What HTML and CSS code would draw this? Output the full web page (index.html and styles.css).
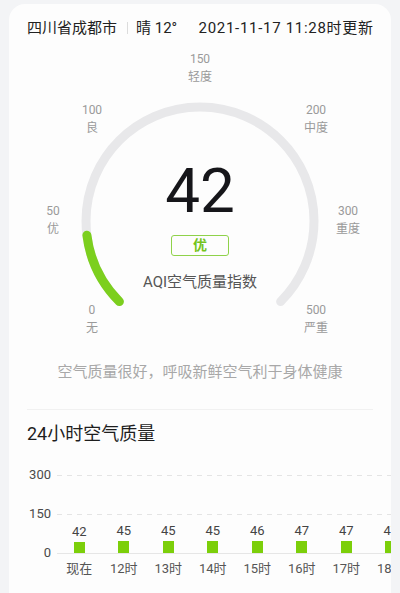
FILE: index.html
```html
<!DOCTYPE html>
<html lang="zh">
<head>
<meta charset="utf-8">
<title>空气质量</title>
<link rel="stylesheet" href="styles.css">
</head>
<body>
<div class="card">
  <div class="header">
    <span class="city">四川省成都市</span>
    <span class="sep"></span>
    <span class="weather">晴 12°</span>
    <span class="updated">2021-11-17 11:28时更新</span>
  </div>

  <div class="gauge">
    <svg class="gauge-svg" width="382" height="307" viewBox="0 0 382 307">
      <path d="M110.4 263.6 A114 114 0 1 1 271.6 263.6" fill="none" stroke="#e8e8ea" stroke-width="9" stroke-linecap="round"/>
      <path d="M110.4 263.6 A114 114 0 0 1 77.9 197.3" fill="none" stroke="#7ccf1e" stroke-width="9" stroke-linecap="round"/>
    </svg>
    <div class="tick t150"><span>150</span><span>轻度</span></div>
    <div class="tick t100"><span>100</span><span>良</span></div>
    <div class="tick t200"><span>200</span><span>中度</span></div>
    <div class="tick t50"><span>50</span><span>优</span></div>
    <div class="tick t300"><span>300</span><span>重度</span></div>
    <div class="tick t0"><span>0</span><span>无</span></div>
    <div class="tick t500"><span>500</span><span>严重</span></div>
    <div class="center">
      <div class="value">42</div>
      <div class="badge">优</div>
      <div class="aqi-label">AQI空气质量指数</div>
    </div>
  </div>

  <div class="desc">空气质量很好，呼吸新鲜空气利于身体健康</div>
  <div class="divider"></div>
  <div class="title">24小时空气质量</div>

  <div class="chart">
    <div class="yaxis">
      <span>300</span>
      <span>150</span>
      <span>0</span>
    </div>
    <div class="plot-wrap">
      <div class="plot">
        <div class="col"><span class="num">42</span><span class="bar" style="height:10.9px"></span></div>
        <div class="col"><span class="num">45</span><span class="bar" style="height:11.7px"></span></div>
        <div class="col"><span class="num">45</span><span class="bar" style="height:11.7px"></span></div>
        <div class="col"><span class="num">45</span><span class="bar" style="height:11.7px"></span></div>
        <div class="col"><span class="num">46</span><span class="bar" style="height:12px"></span></div>
        <div class="col"><span class="num">47</span><span class="bar" style="height:12.2px"></span></div>
        <div class="col"><span class="num">47</span><span class="bar" style="height:12.2px"></span></div>
        <div class="col"><span class="num">47</span><span class="bar" style="height:12.2px"></span></div>
      </div>
      <div class="xaxis">
        <span>现在</span><span>12时</span><span>13时</span><span>14时</span><span>15时</span><span>16时</span><span>17时</span><span>18时</span>
      </div>
    </div>
  </div>
</div>
</body>
</html>
```

FILE: styles.css
```css
* { box-sizing: border-box; }
html, body { margin: 0; padding: 0; }
body {
  background: #f3f4f6;
  font-family: Roboto, "Noto Sans CJK SC", sans-serif;
  width: 400px;
  height: 593px;
  overflow: hidden;
}
.card {
  margin: 4px 9px 0;
  width: 382px;
  height: 589px;
  background: #fdfdfd;
  border-radius: 16px 16px 0 0;
  padding: 14px 18px 0;
  overflow: hidden;
}
.header {
  display: flex;
  align-items: center;
  height: 20px;
  line-height: 20px;
  font-size: 15px;
  color: #222;
}
.sep {
  width: 1px;
  height: 12px;
  background: #dcdcdc;
  margin: 0 8px 0 10px;
}
.updated {
  margin-left: auto;
  letter-spacing: 0.7px;
  margin-right: -0.7px;
}

.gauge {
  position: relative;
  margin: 0 -18px;
  height: 307px;
}
.gauge-svg { display: block; }
.tick {
  position: absolute;
  transform: translateX(-50%);
  display: flex;
  flex-direction: column;
  align-items: center;
  font-size: 12px;
  line-height: 18px;
  color: #9a9a9a;
  white-space: nowrap;
}
.t150 { left: 191px; top: 12px; }
.t100 { left: 83px; top: 63px; }
.t200 { left: 307px; top: 63px; }
.t50 { left: 44px; top: 164px; }
.t300 { left: 339px; top: 164px; }
.t0 { left: 83px; top: 263px; }
.t500 { left: 307px; top: 263px; }

.center {
  position: absolute;
  top: 122px;
  left: 0;
  right: 0;
  display: flex;
  flex-direction: column;
  align-items: center;
}
.value {
  font-size: 62px;
  line-height: 62px;
  height: 62px;
  color: #16161a;
  font-weight: 400;
}
.badge {
  margin-top: 13px;
  width: 58px;
  height: 21px;
  border: 1px solid #8fd24a;
  border-radius: 3px;
  color: #74c41c;
  font-size: 14px;
  font-weight: 700;
  line-height: 19px;
  text-align: center;
}
.aqi-label {
  margin-top: 16px;
  font-size: 15px;
  line-height: 20px;
  color: #555;
}

.desc {
  margin-top: 17px;
  text-align: center;
  font-size: 15px;
  line-height: 20px;
  color: #a8a8a8;
}
.divider {
  margin-top: 27px;
  height: 1px;
  background: #f1f1f1;
}
.title {
  margin-top: 12px;
  font-size: 18px;
  line-height: 24px;
  color: #1e1e1e;
}

.chart {
  margin-top: 21px;
  margin-right: -18px;
  display: flex;
}
.yaxis {
  width: 24px;
  height: 94px;
  margin-right: 6px;
  display: flex;
  flex-direction: column;
  justify-content: space-between;
  align-items: flex-end;
  font-size: 13px;
  line-height: 16px;
  color: #4a4a4a;
}
.plot-wrap {
  flex: 1;
  margin-top: 8px;
  min-width: 0;
}
.plot {
  height: 79px;
  display: flex;
  align-items: flex-end;
  border-bottom: 1px solid #e6e6e6;
  background-image:
    linear-gradient(to right, #e4e4e4 50%, transparent 50%),
    linear-gradient(to right, #e4e4e4 50%, transparent 50%);
  background-size: 10px 1px, 10px 1px;
  background-repeat: repeat-x, repeat-x;
  background-position: 0 0, 0 39px;
}
.col {
  flex: none;
  width: 44.5px;
  display: flex;
  flex-direction: column;
  align-items: center;
}
.num {
  font-size: 13px;
  line-height: 14px;
  color: #444;
  margin-bottom: 3px;
}
.bar {
  display: block;
  width: 11px;
  background: #7ccf0a;
}
.xaxis {
  margin-top: 7px;
  display: flex;
}
.xaxis span {
  flex: none;
  width: 44.5px;
  text-align: center;
  font-size: 13px;
  line-height: 16px;
  color: #555;
  white-space: nowrap;
}
```
